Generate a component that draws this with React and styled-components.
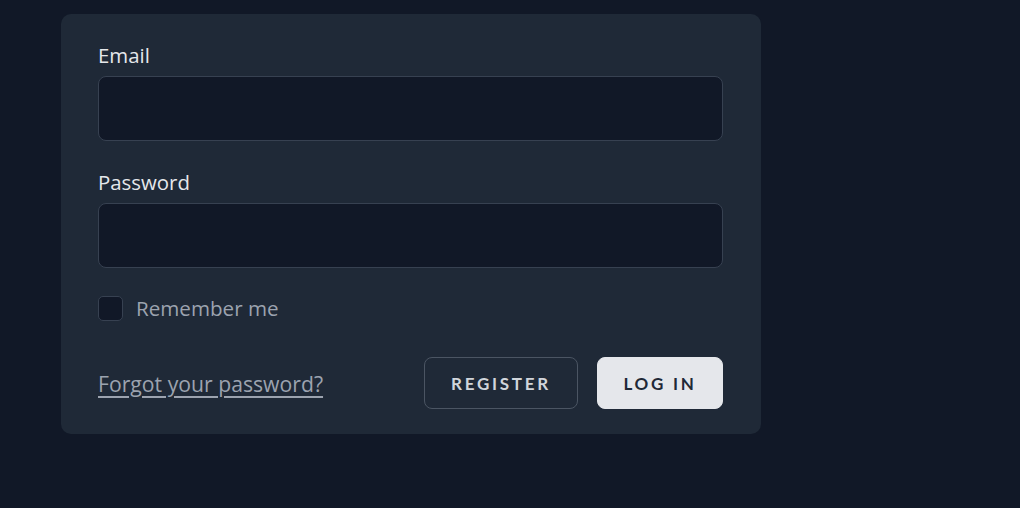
import React from 'react';
import styled, {createGlobalStyle} from 'styled-components';

const GlobalStyle = createGlobalStyle`
  html, body {
    margin: 0;
    padding: 0;
    background: #111827;
    height: 100%;
  }
  body {
    font-family: "Open Sans", "Noto Sans", sans-serif;
    -webkit-font-smoothing: antialiased;
  }
`

const Page = styled.div`
  min-height: 508px;
  padding: 14px 0 0 61px;
  box-sizing: border-box;
`

const Card = styled.form`
  width: 700px;
  box-sizing: border-box;
  background: #1f2937;
  border-radius: 10px;
  padding: 27px 38px 25px 37px;
`

const Field = styled.div`
  display: flex;
  flex-direction: column;
  gap: 7px;
  margin-bottom: ${p => p.last ? '28px' : '27px'};
`

const Label = styled.label`
  color: #e5e7eb;
  font-size: 20.4px;
  font-weight: 500;
  line-height: 28px;
`

const Input = styled.input`
  height: 65px;
  box-sizing: border-box;
  background: #111827;
  border: 1px solid #374151;
  border-radius: 8px;
  color: #e5e7eb;
  font-size: 18px;
  padding: 0 16px;
  font-family: inherit;
  outline: none;
`

const CheckRow = styled.label`
  display: flex;
  align-items: center;
  gap: 13px;
  color: #9ca3af;
  font-size: 20.6px;
  line-height: 25px;
`

const Box = styled.span`
  width: 25px;
  height: 25px;
  box-sizing: border-box;
  background: #111827;
  border: 1px solid #374151;
  border-radius: 5px;
`

const Actions = styled.div`
  display: flex;
  align-items: center;
  margin-top: 36px;
  gap: 19px;
`

const ForgotLink = styled.a`
  color: #9ca3af;
  font-size: 21.2px;
  text-decoration: underline;
  text-underline-offset: 4px;
  margin-right: auto;
`

const Button = styled.button`
  height: 52px;
  box-sizing: border-box;
  border-radius: 8px;
  font-family: Lato, "Open Sans", sans-serif;
  font-size: 17px;
  font-weight: 700;
  letter-spacing: 0.16em;
  padding: 0 ${p => p.primary ? '25.5px' : '26px'};
  background: ${p => p.primary ? '#e5e7eb' : '#1f2937'};
  color: ${p => p.primary ? '#1f2937' : '#d1d5db'};
  border: 1px solid ${p => p.primary ? '#e5e7eb' : '#4b5563'};
`

export default function App() {
  return (
    <Page>
      <GlobalStyle/>
      <Card onSubmit={e => e.preventDefault()}>
        <Field>
          <Label>Email</Label>
          <Input type="email"/>
        </Field>
        <Field last>
          <Label>Password</Label>
          <Input type="password"/>
        </Field>
        <CheckRow>
          <Box/>
          Remember me
        </CheckRow>
        <Actions>
          <ForgotLink href="#">Forgot your password?</ForgotLink>
          <Button type="button">REGISTER</Button>
          <Button type="submit" primary>LOG IN</Button>
        </Actions>
      </Card>
    </Page>
  )
}
